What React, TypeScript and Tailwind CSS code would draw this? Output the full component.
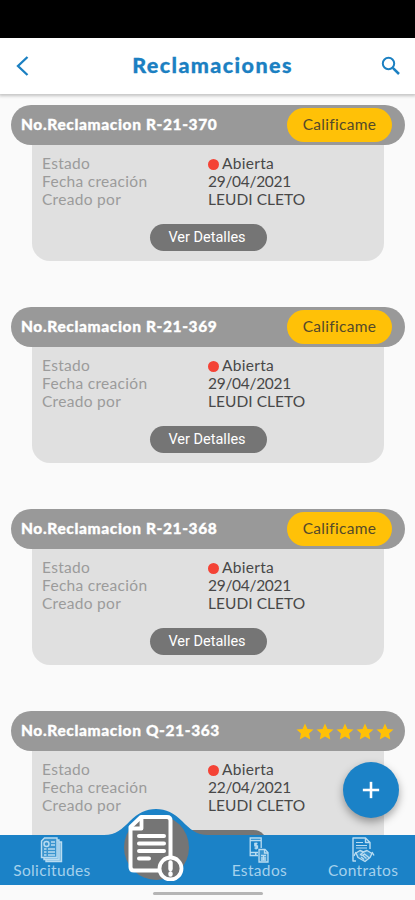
import { Plus } from 'lucide-react';

type Claim = {
  id: string;
  date: string;
  owner: string;
  rating?: number;
};

const claims: Claim[] = [
  { id: 'R-21-370', date: '29/04/2021', owner: 'LEUDI CLETO' },
  { id: 'R-21-369', date: '29/04/2021', owner: 'LEUDI CLETO' },
  { id: 'R-21-368', date: '29/04/2021', owner: 'LEUDI CLETO' },
  { id: 'Q-21-363', date: '22/04/2021', owner: 'LEUDI CLETO', rating: 5 },
];

function Star() {
  return (
    <svg viewBox="0 0 20 20" className="h-5 w-5 fill-[#ffc107]">
      <path d="M10 1.500l2.500 5.400 6 .6-4.500 4 1.300 6L10 14.400l-5.300 3.100 1.300-6-4.500-4 6-.6z" />
    </svg>
  );
}

function ClaimCard({ claim }: { claim: Claim }) {
  return (
    <article className="h-[202px] shrink-0">
      <div className="flex h-10 items-center justify-between rounded-full bg-[#999999] pl-[10px] pr-[13px]">
        <h2 className="whitespace-nowrap text-[15.5px] font-black tracking-[0.62px] text-white [-webkit-text-stroke:0.3px_white]">
          No.Reclamacion {claim.id}
        </h2>
        {claim.rating ? (
          <div className="-mr-[3px] flex pt-px">
            {Array.from({ length: claim.rating }, (_, i) => (
              <Star key={i} />
            ))}
          </div>
        ) : (
          <button className="h-[34px] w-[105px] rounded-full bg-[#ffc107] text-[15.5px] tracking-[0.3px] text-[#54492a]">
            Calificame
          </button>
        )}
      </div>
      <div className="ml-[21px] mr-[21px] flex h-[116px] flex-col items-center rounded-b-[18px] bg-[#e0e0e0] pt-[9px]">
        <dl className="grid w-full grid-cols-[166px_1fr] pl-[10px] text-[15.5px] leading-[18px] tracking-[0.3px] text-[#484848]">
          <dt className="text-[#9b9b9b]">Estado</dt>
          <dd className="flex items-center">
            <span className="mr-[3px] mt-0.5 h-[11px] w-[11px] rounded-full bg-[#f44336]" />
            Abierta
          </dd>
          <dt className="text-[#9b9b9b]">Fecha creación</dt>
          <dd className="tracking-[-0.3px]">{claim.date}</dd>
          <dt className="text-[#9b9b9b]">Creado por</dt>
          <dd className="tracking-[0.05px]">{claim.owner}</dd>
        </dl>
        <button className="mt-4 h-[27px] w-[117px] rounded-full bg-[#757575] pr-0.5 font-['Roboto',sans-serif] text-[14.5px] text-white">
          Ver Detalles
        </button>
      </div>
    </article>
  );
}

function RequestsIcon() {
  return (
    <svg viewBox="0 0 24 26" className="h-[26px] w-6" fill="none" stroke="#b9dcf1" strokeWidth="1.4">
      <path d="M6 22v2.500h15.500V5H19M4 20v2.500h15V3h-2" fill="#75b6df" />
      <path d="M4.500 1h12.500v19.500H1.500V4z" fill="#3b95cf" />
      <circle cx="6.500" cy="7" r="2.500" />
      <path d="M11 5h4M11 8h4M4 12h2.500M8 12h7M4 15h2.500M8 15h7M4 18h2.500M8 18h7" />
    </svg>
  );
}

function StatementsIcon() {
  return (
    <svg viewBox="0 0 20 26" className="h-[26px] w-5" fill="none" stroke="#b9dcf1" strokeWidth="1.3">
      <path d="M9 18.500H1.200V1h11v10M1.500 3.500h10.500M1.500 15.500H9M6 17h1.500" />
      <path d="M8.500 6.500H5.800v2.300h2.700v2.400H5.500M7.100 5.500v7" />
      <path d="M10 12.500h6l3 3v9.500h-9z" fill="#3b95cf" />
      <path d="M15.500 12.500V16H19M12 18.500h5M12 21h5M12 23h5M14.500 18v5" />
    </svg>
  );
}

function ContractsIcon() {
  return (
    <svg viewBox="0 0 24 26" className="h-[26px] w-6" fill="none" stroke="#b9dcf1" strokeWidth="1.4" strokeLinejoin="round">
      <path d="M5 24H2V1h12.500L19 5.500V12M14.500 1v4.500H19" />
      <path d="M5 5.500h7M5 8.500h11M5 11h11" strokeWidth="1.1" />
      <path d="M5 16l4-2.500 3.500 1.500 3.500-1.500 5 3-2 4-5 4-7-4z" fill="#3b95cf" />
      <path d="M12.500 15l-3 2.500c1.500 1.500 3 .5 4-.5l5 4M10 20l3 2.500M12 18.500l3.500 3M5 15l-2 4M21 15l2 3.500" />
    </svg>
  );
}

function ClaimsIcon() {
  return (
    <svg viewBox="0 0 58 68" className="h-[68px] w-[58px]" fill="none" stroke="white">
      <path d="M14 4h26q3.500 0 3.500 3.500V54q0 3.500-3.500 3.500H7q-3.500 0-3.500-3.500V14z" fill="#757575" strokeWidth="4" strokeLinejoin="round" />
      <path d="M14.500 4v11.500H4" strokeWidth="3.800" strokeLinejoin="round" />
      <path d="M12 23h25M12 30.500h25M12 38h25M12 45.500h10" strokeWidth="4" strokeLinecap="round" />
      <circle cx="43.500" cy="55.500" r="11" fill="#757575" strokeWidth="3.800" />
      <path d="M43.500 49.500v6.500M43.500 60.500v1" strokeWidth="4.400" strokeLinecap="round" />
    </svg>
  );
}

export default function App() {
  return (
    <div className="relative flex h-[900px] w-[415px] flex-col overflow-hidden bg-[#fafafa] font-['Lato',sans-serif]">
      <div className="h-[38px] shrink-0 bg-black" />
      <header className="z-10 flex h-14 shrink-0 items-center justify-between bg-white pl-[15px] pr-[14px] shadow-[0_1px_3px_1px_rgba(0,0,0,0.22)]">
        <button aria-label="Volver">
          <svg viewBox="0 0 14 20" className="h-5 w-[14px]" fill="none" stroke="#1b80c2" strokeWidth="2.300">
            <path d="M12.500 1L3 10l9.500 9" />
          </svg>
        </button>
        <h1 className="pb-0.5 pl-[15px] text-[21.5px] font-black tracking-[1.4px] text-[#1b80c2] [-webkit-text-stroke:0.3px_#1b80c2]">
          Reclamaciones
        </h1>
        <button aria-label="Buscar">
          <svg viewBox="0 0 20 20" className="h-5 w-5" fill="none" stroke="#1b80c2">
            <circle cx="7.500" cy="7.500" r="5.700" strokeWidth="2" />
            <path d="M11.800 11.800l6.200 6.200" strokeWidth="2.500" />
          </svg>
        </button>
      </header>

      <main className="flex min-h-0 flex-1 flex-col overflow-hidden pl-[11px] pr-[10px] pt-[11px]">
        {claims.map((claim) => (
          <ClaimCard key={claim.id} claim={claim} />
        ))}
      </main>

      <nav className="relative h-[50px] shrink-0 bg-[#1b82c7] text-[15.5px] leading-[18px] tracking-[0.35px] text-[#a5d1ec]">
        {/* raised hump behind the active tab */}
        <svg viewBox="0 0 104 28" className="absolute -top-[26px] left-[104px] h-7 w-[104px] fill-[#1b82c7]">
          <path d="M0 28V26C12 26 18 20 26 12C34 4 42 0 52 0S70 4 78 12C86 20 92 26 104 26V28z" />
        </svg>
        <div className="grid h-full grid-cols-4">
          <a className="flex flex-col items-center pt-[2px]">
            <RequestsIcon />
            <span className="-mt-0.5">Solicitudes</span>
          </a>
          <a aria-label="Reclamaciones" />
          <a className="flex flex-col items-center pt-[2px]">
            <StatementsIcon />
            <span className="-mt-0.5">Estados</span>
          </a>
          <a className="flex flex-col items-center pt-[2px]">
            <ContractsIcon />
            <span className="-mt-0.5">Contratos</span>
          </a>
        </div>
        <div className="absolute -top-[20px] left-[124px] h-[65px] w-[65px] rounded-full bg-[#757575]" />
        <div className="absolute -top-[22px] left-[127px]">
          <ClaimsIcon />
        </div>
      </nav>
      <div className="flex h-[15px] shrink-0 justify-center pt-[7px]">
        <div className="h-[3px] w-[110px] rounded-full bg-[#b5b5b5]" />
      </div>

      <button
        aria-label="Nueva reclamación"
        className="absolute bottom-[82px] right-4 z-10 flex h-14 w-14 items-center justify-center rounded-full bg-[#1b82c7] text-white shadow-[0_4px_8px_rgba(0,0,0,0.35)]"
      >
        <Plus className="h-7 w-7" strokeWidth={2.2} strokeLinecap="butt" />
      </button>
    </div>
  );
}
